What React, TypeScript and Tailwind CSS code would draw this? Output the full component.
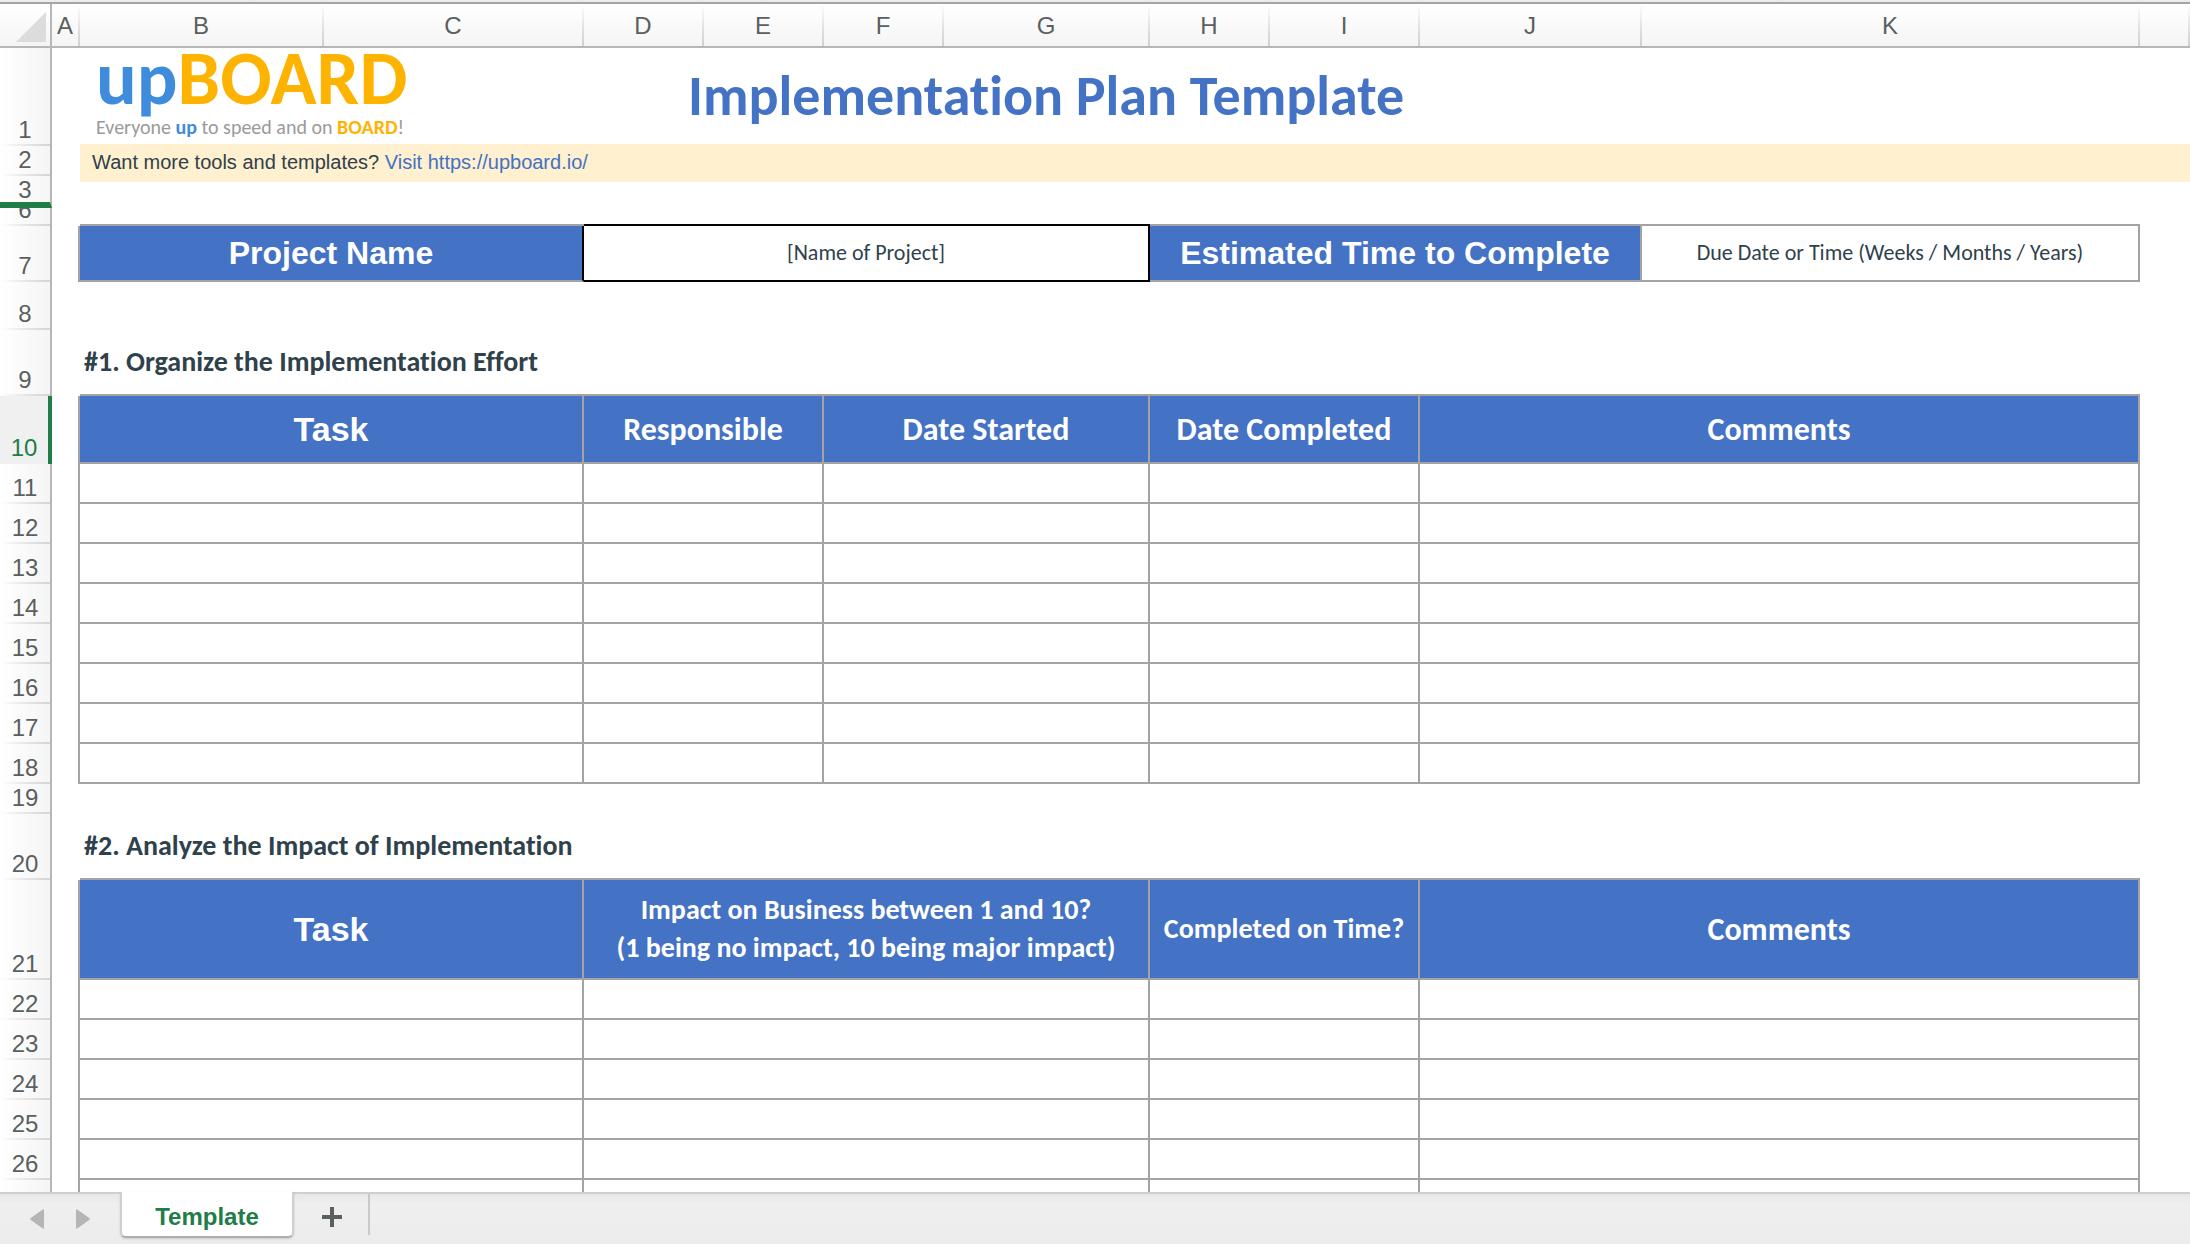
import type { ReactNode } from "react";

const LINE = "border-[#a3a3a3]";
const SHEET_FONT = "font-['Carlito','Calibri','Lato',sans-serif] [font-variant-ligatures:none]";
const HEADER_BG = "bg-[#4472c4] text-white font-bold text-center";

const COLUMNS = ["A", "B", "C", "D", "E", "F", "G", "H", "I", "J", "K", ""];

function RowHeader({ label, variant = "normal" }: { label: string; variant?: "normal" | "frozen" | "active" | "clipped" }) {
  const skin =
    variant === "active"
      ? "border-r-4 border-[#217d48] text-[#217d48] bg-[#f0f0f0]"
      : variant === "frozen"
        ? "border-r-2 border-b-6 border-r-[#b7b7b7] border-b-[#217d48] text-[#5a5f60] bg-linear-to-r from-white to-[#f6f6f6]"
        : "border-r-2 border-[#b7b7b7] text-[#5a5f60] bg-[linear-gradient(to_right,transparent,#d4d4d4),linear-gradient(to_right,#ffffff,#f5f5f5)] bg-[length:100%_2px,100%_100%] bg-[position:bottom,top] bg-no-repeat";
  const pad = variant === "frozen" ? "pb-0" : "pb-1";
  return (
    <th scope="row" className={`p-0 align-bottom font-normal ${skin}`}>
      {variant === "clipped" ? (
        <div className="flex h-[18px] items-end justify-center overflow-hidden pb-1 text-2xl leading-6">
          <span>{label}</span>
        </div>
      ) : (
        <div className={`text-center text-2xl leading-6 ${pad}`}>{label}</div>
      )}
    </th>
  );
}

function Cell({ span = 1, className = "", children }: { span?: number; className?: string; children?: ReactNode }) {
  return (
    <td colSpan={span} className={`p-0 ${className}`}>
      {children}
    </td>
  );
}

function HeaderCell({ span, className = "", children }: { span: number; className?: string; children: ReactNode }) {
  return (
    <th scope="col" colSpan={span} className={`border-r-2 border-b-2 px-0 pb-0 ${LINE} ${HEADER_BG} ${className}`}>
      {children}
    </th>
  );
}

function SectionRow({ row, title }: { row: string; title: string }) {
  return (
    <tr className="h-[66px]">
      <RowHeader label={row} />
      <Cell />
      <Cell span={10} className={`border-b-2 pl-1 text-left text-[28px] leading-8 font-bold text-[#2f414b] ${LINE} ${SHEET_FONT}`}>
        <h2>{title}</h2>
      </Cell>
      <Cell />
    </tr>
  );
}

function BlankRow({ row, spans }: { row: string; spans: number[] }) {
  return (
    <tr className="h-10">
      <RowHeader label={row} />
      <Cell className={`border-r-2 ${LINE}`} />
      {spans.map((span, i) => (
        <Cell key={i} span={span} className={`border-r-2 border-b-2 ${LINE}`} />
      ))}
      <Cell />
    </tr>
  );
}

function Logo() {
  return (
    <div className={`flex flex-col gap-2 pl-4 ${SHEET_FONT}`}>
      <div className="text-[76px] leading-[60px] font-bold text-[#3f8bdc]">
        up<span className="text-[#ffb301]">BOARD</span>
      </div>
      <div className="text-xl leading-[22px] text-[#9a9a9a]">
        Everyone <b className="text-[#3f8bdc]">up</b> to speed and on <b className="text-[#ffb301]">BOARD</b>!
      </div>
    </div>
  );
}

function Sheet() {
  return (
    <table className="w-full table-fixed border-separate border-spacing-0 bg-white">
      <colgroup>
        <col className="w-[52px]" />
        <col className="w-[28px]" />
        <col className="w-[244px]" />
        <col className="w-[260px]" />
        <col className="w-[120px]" />
        <col className="w-[120px]" />
        <col className="w-[120px]" />
        <col className="w-[206px]" />
        <col className="w-[120px]" />
        <col className="w-[150px]" />
        <col className="w-[222px]" />
        <col className="w-[498px]" />
        <col className="w-[50px]" />
      </colgroup>
      <thead>
        <tr className="h-11">
          <th className="border-r-2 border-b-2 border-[#b7b7b7] bg-linear-to-b from-white to-[#f5f5f5] p-0">
            <button type="button" aria-label="Select all" className="flex w-full justify-end pt-1 pr-1">
              <svg viewBox="0 0 30 30" className="size-[30px]" fill="#dcdcdc">
                <path d="M30 0v30H0z" />
              </svg>
            </button>
          </th>
          {COLUMNS.map((name, i) => (
            <th
              key={i}
              scope="col"
              className="border-b-2 border-[#b7b7b7] bg-[linear-gradient(to_bottom,transparent,#d0d0d0),linear-gradient(to_bottom,#ffffff,#f5f5f5)] bg-[length:2px_100%,100%_100%] bg-[position:right,left] bg-no-repeat pt-0.5 pr-0.5 pb-0 pl-0 text-center text-2xl leading-6 font-normal text-[#5a5f60]"
            >
              {name}
            </th>
          ))}
        </tr>
      </thead>
      <tbody>
        <tr className="h-[98px]">
          <RowHeader label="1" />
          <Cell />
          <Cell span={2} className="border-b-2 border-[#fff0cf] align-top">
            <Logo />
          </Cell>
          <Cell span={8} className={`border-b-2 border-[#fff0cf] pl-[104px] ${SHEET_FONT}`}>
            <h1 className="text-[56px] leading-[64px] font-bold text-[#4472c4]">Implementation Plan Template</h1>
          </Cell>
          <Cell className="border-b-2 border-[#fff0cf]" />
        </tr>
        <tr className="h-[30px]">
          <RowHeader label="2" />
          <td rowSpan={2} className="p-0" />
          <td rowSpan={2} colSpan={11} className="p-0 align-top">
            <p className="h-9 bg-[#fff0cf] pl-3 font-['Liberation_Sans',Arial,sans-serif] text-xl leading-8 text-[#2f414b]">
              Want more tools and templates?{" "}
              <a href="https://upboard.io/" className="text-[#4472c4]">
                Visit https://upboard.io/
              </a>
            </p>
          </td>
        </tr>
        <tr className="h-8">
          <RowHeader label="3" variant="frozen" />
        </tr>
        <tr className="h-[18px]">
          <RowHeader label="6" variant="clipped" />
          <Cell />
          <Cell span={2} className={`border-b-2 ${LINE}`} />
          <Cell span={4} className="border-b-2 border-black" />
          <Cell span={4} className={`border-b-2 ${LINE}`} />
          <Cell />
        </tr>
        <tr className="h-14">
          <RowHeader label="7" />
          <Cell className={`border-r-2 ${LINE}`} />
          <th
            scope="row"
            colSpan={2}
            className={`border-r-2 border-b-2 border-r-black border-b-[#a3a3a3] p-0 text-[32px] leading-9 ${HEADER_BG}`}
          >
            Project Name
          </th>
          <Cell
            span={4}
            className={`border-r-2 border-b-2 border-black text-center text-[22px] leading-7 text-[#2f414b] ${SHEET_FONT}`}
          >
            [Name of Project]
          </Cell>
          <th scope="row" colSpan={3} className={`border-r-2 border-b-2 p-0 text-[32px] leading-9 ${LINE} ${HEADER_BG}`}>
            Estimated Time to Complete
          </th>
          <Cell className={`border-r-2 border-b-2 text-center text-[22px] leading-7 text-[#2f414b] ${LINE} ${SHEET_FONT}`}>
            Due Date or Time (Weeks / Months / Years)
          </Cell>
          <Cell />
        </tr>
        <tr className="h-12">
          <RowHeader label="8" />
          <Cell span={12} />
        </tr>

        <SectionRow row="9" title="#1. Organize the Implementation Effort" />
        <tr className="h-[68px]">
          <RowHeader label="10" variant="active" />
          <Cell className={`border-r-2 ${LINE}`} />
          <HeaderCell span={2} className="pt-0 text-[34px] leading-9">
            Task
          </HeaderCell>
          <HeaderCell span={2} className={`pt-0.5 text-[32px] leading-9 ${SHEET_FONT}`}>
            Responsible
          </HeaderCell>
          <HeaderCell span={2} className={`pt-0.5 text-[32px] leading-9 ${SHEET_FONT}`}>
            Date Started
          </HeaderCell>
          <HeaderCell span={2} className={`pt-0.5 text-[32px] leading-9 ${SHEET_FONT}`}>
            Date Completed
          </HeaderCell>
          <HeaderCell span={2} className={`pt-0.5 text-[32px] leading-9 ${SHEET_FONT}`}>
            Comments
          </HeaderCell>
          <Cell />
        </tr>
        {["11", "12", "13", "14", "15", "16", "17", "18"].map((row) => (
          <BlankRow key={row} row={row} spans={[2, 2, 2, 2, 2]} />
        ))}
        <tr className="h-[30px]">
          <RowHeader label="19" />
          <Cell span={12} />
        </tr>

        <SectionRow row="20" title="#2. Analyze the Impact of Implementation" />
        <tr className="h-[100px]">
          <RowHeader label="21" />
          <Cell className={`border-r-2 ${LINE}`} />
          <HeaderCell span={2} className="pt-0 text-[34px] leading-9">
            Task
          </HeaderCell>
          <HeaderCell span={4} className={`pt-0 text-[28px] leading-[38px] ${SHEET_FONT}`}>
            Impact on Business between 1 and 10?
            <br />
            (1 being no impact, 10 being major impact)
          </HeaderCell>
          <HeaderCell span={2} className={`pt-0 text-[28px] leading-[38px] ${SHEET_FONT}`}>
            Completed on Time?
          </HeaderCell>
          <HeaderCell span={2} className={`pt-0.5 text-[32px] leading-9 ${SHEET_FONT}`}>
            Comments
          </HeaderCell>
          <Cell />
        </tr>
        {["22", "23", "24", "25", "26", ""].map((row) => (
          <BlankRow key={row} row={row} spans={[2, 4, 2, 2]} />
        ))}
      </tbody>
    </table>
  );
}

function TabBar() {
  return (
    <footer className="flex h-[52px] shrink-0 items-start border-t-2 border-[#cfcfcf] bg-linear-to-b from-[#e8e8e8] via-[#efefef] via-20% to-[#ececec]">
      <div className="flex h-[50px] w-[120px] shrink-0 items-center gap-8 pl-[30px] text-[#b4b6b5]">
        <button type="button" aria-label="Previous sheet">
          <svg viewBox="0 0 14 20" className="h-5 w-3.5" fill="currentColor">
            <path d="M14 1.5v17q0 2-1.6.8L.8 11Q-.4 10 .8 9L12.400 .7Q14-.5 14 1.500z" />
          </svg>
        </button>
        <button type="button" aria-label="Next sheet">
          <svg viewBox="0 0 14 20" className="h-5 w-3.5" fill="currentColor">
            <path d="M0 1.500v17q0 2 1.600.8L13.200 11q1.200-1 0-2L1.600.7Q0-.5 0 1.500z" />
          </svg>
        </button>
      </div>
      <button
        type="button"
        className="-mt-0.5 h-[46px] w-[174px] shrink-0 rounded-b-md border-x-2 border-b-2 border-[#cfcfcf] border-b-[#a9adab] bg-white pt-1.5 text-2xl leading-6 font-bold text-[#217d48] shadow-sm"
      >
        Template
      </button>
      <button
        type="button"
        aria-label="Add sheet"
        className="flex h-[41px] w-[76px] shrink-0 items-center justify-center border-r-2 border-[#c9c9c9] pt-1 pl-0.5"
      >
        <svg viewBox="0 0 20 20" className="size-5" stroke="#5a5f60" strokeWidth="4">
          <path d="M10 0v20M0 10h20" />
        </svg>
      </button>
    </footer>
  );
}

export default function App() {
  return (
    <div className="flex h-screen flex-col overflow-hidden bg-white font-['Liberation_Sans',Arial,sans-serif]">
      <div className="h-1 shrink-0 border-b-2 border-[#a5a5a5] bg-[#ececec]" />
      <main className="min-h-0 flex-1 overflow-hidden">
        <Sheet />
      </main>
      <TabBar />
    </div>
  );
}
